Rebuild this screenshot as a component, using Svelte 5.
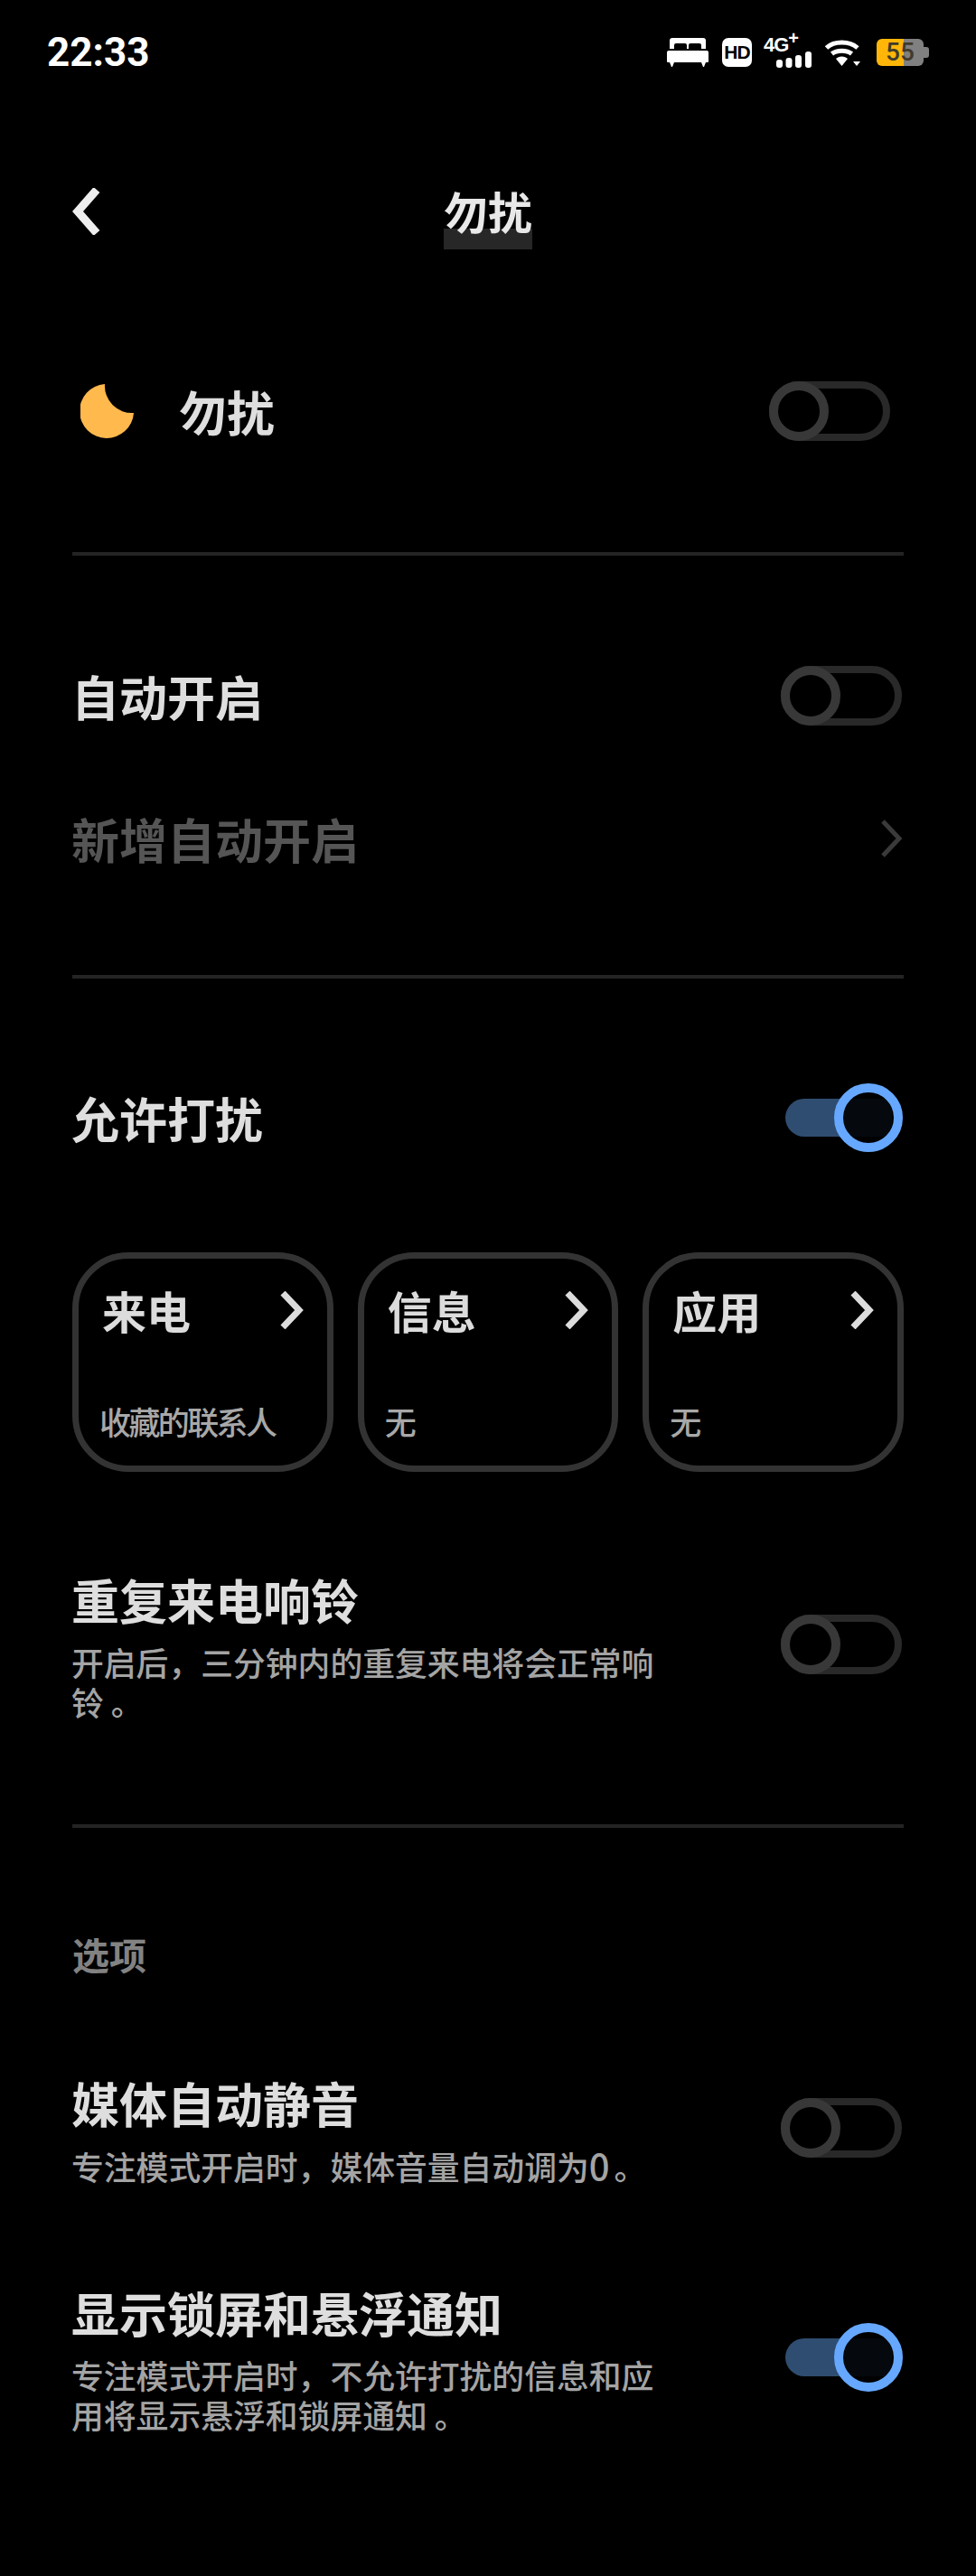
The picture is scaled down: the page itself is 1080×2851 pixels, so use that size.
<script>
    const cards = [
        { title: '来电', sub: '收藏的联系人' },
        { title: '信息', sub: '无' },
        { title: '应用', sub: '无' }
    ];
</script>

{#snippet toggle(on)}
    {#if on}
        <div class="sw-on">
            <div class="sw-on-track"></div>
            <div class="sw-on-knob"></div>
        </div>
    {:else}
        <div class="sw-off"><div class="sw-off-knob"></div></div>
    {/if}
{/snippet}

{#snippet chevron()}
    <svg class="chev" width="26" height="42" viewBox="0 0 26 42">
        <path d="M3 2 L21 21 L3 40" fill="none" stroke="currentColor" stroke-width="7" />
    </svg>
{/snippet}

<div class="page">
    <div class="status">
        <span class="time">22:33</span>
        <div class="icons">
            <svg width="46" height="32" viewBox="0 0 46 32">
                <path fill="#fff" d="M6 0 H40 a3 3 0 0 1 3 3 V12 H38 V8 a2 2 0 0 0 -2 -2 H26 a2 2 0 0 0 -2 2 V12 H22 V8 a2 2 0 0 0 -2 -2 H10 a2 2 0 0 0 -2 2 V12 H3 V3 a3 3 0 0 1 3 -3 Z" />
                <path fill="#fff" d="M2 14 H44 a2 2 0 0 1 2 2 V26 a1 1 0 0 1 -1 1 H43 L41 32 H40 L38 27 H8 L6 32 H5 L3 27 H1 a1 1 0 0 1 -1 -1 V16 a2 2 0 0 1 2 -2 Z" />
            </svg>
            <div class="hd">HD</div>
            <div class="net">
                <span class="net-label">4G<sup>+</sup></span>
                <svg width="39" height="18" viewBox="0 0 39 18">
                    <rect x="0" y="9" width="7" height="9" rx="3" fill="#fff" />
                    <rect x="10.5" y="7" width="7" height="11" rx="3" fill="#fff" />
                    <rect x="21" y="4" width="7" height="14" rx="3" fill="#fff" />
                    <rect x="32" y="0" width="7" height="18" rx="3" fill="#fff" />
                </svg>
            </div>
            <svg width="39" height="30" viewBox="0 0 39 30">
                <path fill="none" stroke="#fff" stroke-width="5" d="M1.5 10 C10 2 27 2 36 10" />
                <path fill="none" stroke="#fff" stroke-width="5" d="M7.5 16.5 C13 12 24 12 29.5 16.5" />
                <path fill="#fff" d="M12 22 C15 18.5 22 18.5 25 22 L18.5 30 Z" />
                <path fill="#fff" d="M31 25 H39 L35 30 Z" />
            </svg>
            <div class="battery">
                <span class="battery-num">55</span>
            </div>
        </div>
    </div>

    <div class="nav">
        <svg class="back" width="32" height="52" viewBox="0 0 32 52">
            <path d="M28 2 L7 26 L28 50" fill="none" stroke="#eee" stroke-width="9" />
        </svg>
        <div class="nav-title"><span class="nav-title-bg"></span><span class="nav-title-text">勿扰</span></div>
    </div>

    <div class="row dnd">
        <div class="dnd-left">
            <svg width="60" height="60" viewBox="0 0 60 60">
                <path fill="#ffb94d" d="M27 0 A30 30 0 1 0 59 32 A30 30 0 0 1 27 0 Z" />
            </svg>
            <span class="title">勿扰</span>
        </div>
        {@render toggle(false)}
    </div>

    <div class="divider d1"></div>

    <div class="row auto">
        <span class="title">自动开启</span>
        <div class="inset">{@render toggle(false)}</div>
    </div>
    <div class="row add">
        <span class="title muted">新增自动开启</span>
        <span class="add-chev">{@render chevron()}</span>
    </div>

    <div class="divider d2"></div>

    <div class="row allow">
        <span class="title">允许打扰</span>
        {@render toggle(true)}
    </div>

    <div class="cards">
        {#each cards as card}
            <div class="card">
                <div class="card-head">
                    <span class="card-title">{card.title}</span>
                    {@render chevron()}
                </div>
                <div class="card-sub">{card.sub}</div>
            </div>
        {/each}
    </div>

    <div class="row detail repeat">
        <div class="detail-text">
            <div class="title">重复来电响铃</div>
            <div class="desc">开启后，三分钟内的重复来电将会正常响铃 。</div>
        </div>
        <div class="inset">{@render toggle(false)}</div>
    </div>

    <div class="divider d3"></div>

    <div class="section-label">选项</div>

    <div class="row detail media">
        <div class="detail-text">
            <div class="title">媒体自动静音</div>
            <div class="desc">专注模式开启时，媒体音量自动调为<span class="zero">0</span>。</div>
        </div>
        <div class="inset">{@render toggle(false)}</div>
    </div>

    <div class="row detail lock">
        <div class="detail-text">
            <div class="title">显示锁屏和悬浮通知</div>
            <div class="desc">专注模式开启时，不允许打扰的信息和应用将显示悬浮和锁屏通知 。</div>
        </div>
        {@render toggle(true)}
    </div>
</div>

<style>
    :global(body) {
        margin: 0;
        background: #000;
    }
    .page {
        width: 1080px;
        height: 2851px;
        overflow: hidden;
        background: #000;
        color: #e8e8e8;
        font-family: "Noto Sans CJK SC", "Noto Sans", sans-serif;
    }
    .status {
        display: flex;
        justify-content: space-between;
        align-items: center;
        height: 116px;
        padding: 0 58px 0 52px;
    }
    .time {
        font-family: Roboto, sans-serif;
        font-weight: 700;
        font-size: 44px;
        color: #fff;
    }
    .icons {
        display: flex;
        align-items: center;
        gap: 15px;
    }
    .hd {
        width: 33px;
        height: 32px;
        border-radius: 7px;
        background: #fff;
        color: #000;
        font: 700 21px/32px "Liberation Sans", sans-serif;
        letter-spacing: -1px;
        text-align: center;
    }
    .net {
        display: flex;
        flex-direction: column;
        align-items: flex-start;
        width: 53px;
        height: 34px;
        margin-left: -2px;
        position: relative;
    }
    .net-label {
        font: 700 22px/18px "Liberation Sans", sans-serif;
        letter-spacing: -1px;
        color: #fff;
    }
    .net-label sup {
        font-size: 20px;
        line-height: 0;
    }
    .net svg {
        position: absolute;
        right: 0;
        bottom: 0;
    }
    .battery {
        width: 52px;
        height: 30px;
        border-radius: 6px;
        background: linear-gradient(90deg, #ffb608 30px, #808080 30px);
        text-align: center;
        position: relative;
        margin-left: 3px;
    }
    .battery::after {
        content: "";
        position: absolute;
        right: -6px;
        top: 9px;
        width: 6px;
        height: 12px;
        border-radius: 0 3px 3px 0;
        background: #808080;
    }
    .battery-num {
        font: 500 28px/30px Roboto, sans-serif;
        color: #403a2c;
    }
    .nav {
        display: flex;
        justify-content: center;
        position: relative;
        height: 68px;
        margin-top: 83px;
    }
    .back {
        position: absolute;
        left: 79px;
        top: 9px;
    }
    .nav-title {
        position: relative;
        font-size: 49px;
        line-height: 68px;
        font-weight: 700;
    }
    .nav-title-text {
        position: relative;
    }
    .nav-title-bg {
        position: absolute;
        left: 0;
        right: 0;
        top: 54px;
        height: 23px;
        background: #272727;
    }
    .row {
        display: flex;
        justify-content: space-between;
        align-items: center;
        padding: 0 80px 0 79px;
    }
    .title {
        font-size: 53px;
        line-height: 72px;
        font-weight: 700;
        color: #dedede;
    }
    .muted {
        color: #555;
    }
    .dnd {
        margin-top: 152px;
        padding-right: 95px;
        padding-left: 89px;
    }
    .dnd-left {
        display: flex;
        align-items: center;
        gap: 49px;
    }
    .inset {
        margin-right: 2px;
    }
    .divider {
        height: 4px;
        margin: 0 80px;
        background: #242424;
    }
    .d1 {
        margin-top: 120px;
    }
    .auto {
        margin-top: 119px;
    }
    .add {
        margin-top: 86px;
    }
    .add-chev {
        color: #3a3a3a;
        display: flex;
    }
    .add-chev path {
        stroke-width: 5;
    }
    .d2 {
        margin-top: 115px;
    }
    .allow {
        margin-top: 116px;
    }
    .sw-off {
        box-sizing: border-box;
        width: 134px;
        height: 66px;
        border: 8px solid #292929;
        border-radius: 33px;
        display: flex;
        align-items: center;
    }
    .sw-off-knob {
        box-sizing: border-box;
        flex: none;
        width: 66px;
        height: 66px;
        margin-left: -8px;
        border: 10px solid #383838;
        border-radius: 50%;
        background: #000;
    }
    .sw-on {
        display: flex;
        align-items: center;
        margin-right: 1px;
    }
    .sw-on-track {
        width: 118px;
        height: 42px;
        border-radius: 21px 0 0 21px;
        background: #2f4d70;
    }
    .sw-on-knob {
        box-sizing: border-box;
        width: 76px;
        height: 76px;
        margin-left: -64px;
        border: 10px solid #66a8ff;
        border-radius: 50%;
        background: rgba(0, 0, 0, 0.88);
    }
    .cards {
        display: grid;
        grid-template-columns: repeat(3, 1fr);
        gap: 27px;
        margin: 111px 80px 0;
    }
    .card {
        box-sizing: border-box;
        height: 243px;
        border: 7px solid #333;
        border-radius: 62px;
        padding: 26px 26px 0 26px;
    }
    .card-head {
        display: flex;
        justify-content: space-between;
        align-items: center;
        color: #dcdcdc;
    }
    .card-title {
        font-size: 49px;
        line-height: 62px;
        font-weight: 700;
    }
    .card-sub {
        margin-top: 69px;
        margin-left: -3px;
        font-size: 35px;
        line-height: 46px;
        letter-spacing: -2.6px;
        font-weight: 500;
        color: #a8a8a8;
    }
    .detail {
        align-items: flex-start;
    }
    .detail-text {
        width: 650px;
    }
    .desc {
        font-size: 35.8px;
        line-height: 44px;
        margin-top: 11px;
        font-weight: 500;
        color: #a4a4a4;
    }
    .zero {
        font-size: 40px;
        letter-spacing: 5px;
    }
    .repeat {
        margin-top: 105px;
    }
    .repeat .inset {
        margin-top: 53px;
    }
    .d3 {
        margin-top: 114px;
    }
    .section-label {
        margin: 110px 80px 0;
        font-size: 41px;
        line-height: 58px;
        font-weight: 700;
        color: #828282;
    }
    .media {
        margin-top: 100px;
    }
    .media .inset {
        margin-top: 31px;
    }
    .lock {
        margin-top: 104px;
    }
    .lock .sw-on {
        margin-top: 48px;
    }
</style>
